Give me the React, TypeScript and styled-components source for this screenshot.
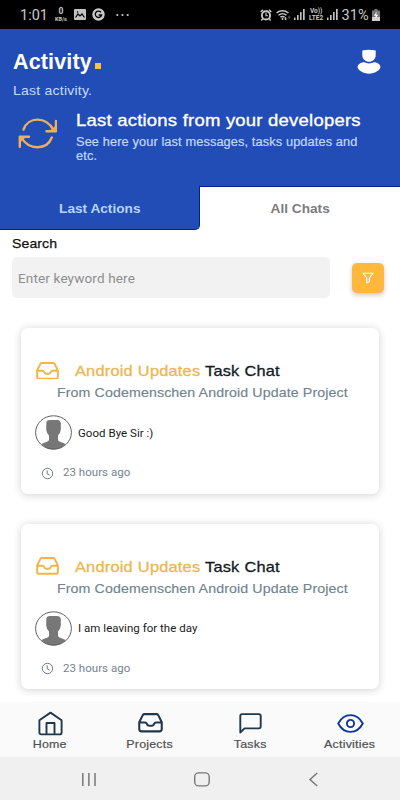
import React from 'react';
import styled, { createGlobalStyle } from 'styled-components';

const GlobalStyle = createGlobalStyle`
  * { box-sizing: border-box; }
  body { margin: 0; background: #fff; }
  svg { display: block; flex: none; }
`;

const sans = '"Liberation Sans", Arial, sans-serif';
const roboto = 'Roboto, sans-serif';

const Screen = styled.div`
  width: 400px;
  height: 800px;
  display: flex;
  flex-direction: column;
  overflow: hidden;
  background: #fff;
  font-family: ${sans};
`;

const StatusBar = styled.div`
  height: 29px;
  flex: none;
  display: flex;
  align-items: center;
  justify-content: space-between;
  padding: 0 20px 0 20px;
  background: #000;
  color: #c9c9c9;
  font-family: ${roboto};
`;

const StatusGroup = styled.div<{ $gap: number }>`
  display: flex;
  align-items: center;
  gap: ${(p) => p.$gap}px;
`;

const StatusText = styled.span`
  font-size: 14.5px;
  line-height: 29px;
  padding-top: 2px;
`;

const TinyStack = styled.span<{ $top: number; $bottom: number; $width: number; $lead?: number }>`
  display: flex;
  flex-direction: column;
  align-items: center;
  width: ${(p) => p.$width}px;
  font-weight: 700;
  white-space: nowrap;
  span:first-child { font-size: ${(p) => p.$top}px; line-height: ${(p) => p.$lead ?? 7}px; }
  span:last-child { font-size: ${(p) => p.$bottom}px; line-height: 6px; }
`;

const Header = styled.header`
  height: 157px;
  flex: none;
  padding: 20px 19px 0 13px;
  background: #224db7;
  color: #fff;
`;

const TitleRow = styled.div`
  display: flex;
  justify-content: space-between;
  align-items: flex-start;
  height: 34px;
`;

const Title = styled.h1`
  margin: 0;
  display: flex;
  align-items: baseline;
  gap: 3px;
  font-size: 21.5px;
  line-height: 27px;
  font-weight: 700;
  letter-spacing: 0.15px;
`;

const Dot = styled.span`
  width: 6px;
  height: 6px;
  background: #eec643;
`;

const Subtitle = styled.div`
  font-size: 13px;
  line-height: 16px;
  letter-spacing: 0.2px;
  color: #c3dcfb;
  transform: scaleX(1.08);
  transform-origin: left;
`;

const Intro = styled.div`
  display: flex;
  gap: 19px;
  padding: 10px 0 0 4px;
`;

const IntroIcon = styled.div`
  padding-top: 9px;
`;

const IntroTitle = styled.h2`
  margin: 0;
  font-size: 17px;
  line-height: 23px;
  font-weight: 400;
  letter-spacing: 0.2px;
  white-space: nowrap;
  -webkit-text-stroke: 0.35px #fff;
  transform: scaleX(1.088);
  transform-origin: left;
`;

const IntroText = styled.p`
  margin: 4px 0 0;
  width: 274px;
  font-size: 12px;
  line-height: 13.5px;
  letter-spacing: 0.1px;
  color: #c0d8fa;
  -webkit-text-stroke: 0.2px #c0d8fa;
  transform: scaleX(1.066);
  transform-origin: left;
`;

const Tabs = styled.div`
  display: flex;
  height: 45px;
  flex: none;
`;

const Tab = styled.div<{ $active?: boolean }>`
  width: 200px;
  height: 44px;
  line-height: ${(p) => (p.$active ? 46 : 44)}px;
  text-align: center;
  font-size: 13px;
  font-weight: 700;
  color: ${(p) => (p.$active ? '#b7d5fb' : '#7b7b7b')};
  background: ${(p) => (p.$active ? '#224db7' : '#fff')};
  border: 0 solid #06218a;
  border-width: ${(p) => (p.$active ? '0 1px 1px 0' : '1px 0 0 0')};
  border-radius: ${(p) => (p.$active ? '0 0 5px 0' : '0')};
  span { display: inline-block; transform: scaleX(1.05); }
`;

const Content = styled.main`
  flex: 1;
  min-height: 0;
  overflow: hidden;
  padding: 5px 0 0;
`;

const SearchLabel = styled.label`
  display: block;
  margin-left: 12px;
  font-size: 13px;
  line-height: 16px;
  letter-spacing: 0.1px;
  color: #111;
  -webkit-text-stroke: 0.25px #111;
  transform: scaleX(1.08);
  transform-origin: left;
`;

const SearchRow = styled.div`
  display: flex;
  align-items: center;
  justify-content: space-between;
  padding: 5px 16px 0 12px;
`;

const SearchField = styled.div`
  width: 318px;
  height: 41px;
  padding-left: 6px;
  border-radius: 5px;
  background: #f2f2f2;
  color: #8e8e8e;
  font-family: ${roboto};
  font-size: 13.5px;
  line-height: 42px;
  letter-spacing: 0.15px;
`;

const FilterButton = styled.button`
  width: 32px;
  height: 30px;
  display: grid;
  place-items: center;
  padding: 0;
  border: 0;
  border-radius: 5px;
  background: #ffb73c;
  box-shadow: 0 2px 5px rgba(0, 0, 0, 0.22);
`;

const CardList = styled.div`
  display: flex;
  flex-direction: column;
  gap: 30px;
  padding: 30px 21px 0;
`;

const Card = styled.article`
  height: 165.5px;
  flex: none;
  padding: 32px 14px 0;
  border-radius: 7px;
  background: #fff;
  box-shadow: 0 1px 9px rgba(0, 0, 0, 0.19);
`;

const CardHeading = styled.div`
  display: flex;
  align-items: center;
  gap: 16px;
  height: 22px;
`;

const CardTitle = styled.h3`
  margin: 0;
  font-size: 15px;
  line-height: 22px;
  font-weight: 400;
  letter-spacing: 0.2px;
  word-spacing: 0.2px;
  white-space: nowrap;
  color: #111b26;
  -webkit-text-stroke: 0.3px;
  transform: scaleX(1.09);
  transform-origin: left;
`;

const Accent = styled.span`
  color: #edb652;
`;

const Project = styled.div`
  margin: 2px 0 0 22px;
  font-size: 13.5px;
  line-height: 18px;
  letter-spacing: 0.1px;
  white-space: nowrap;
  color: #6f8390;
  -webkit-text-stroke: 0.15px;
  transform: scaleX(1.052);
  transform-origin: left;
`;

const Message = styled.div`
  display: flex;
  align-items: center;
  gap: 6px;
  margin-top: 13px;
  font-family: ${roboto};
  font-size: 11.5px;
  letter-spacing: 0.03px;
  color: #1a1a1a;
`;

const Time = styled.div`
  display: flex;
  align-items: center;
  gap: 9px;
  padding: 13px 0 0 6px;
  font-family: ${roboto};
  font-size: 11.5px;
  line-height: 18px;
  letter-spacing: 0.02px;
  color: #74838d;
  svg { margin-top: 2px; }
`;

const BottomNav = styled.nav`
  height: 55px;
  flex: none;
  display: grid;
  grid-template-columns: repeat(4, 1fr);
  background: #fafafa;
`;

const NavItem = styled.div<{ $active?: boolean }>`
  display: flex;
  flex-direction: column;
  align-items: center;
  padding-top: 8px;
  color: ${(p) => (p.$active ? '#0c379b' : '#20384d')};
`;

const NavLabel = styled.span`
  margin-top: 1px;
  font-size: 11.5px;
  line-height: 14px;
  letter-spacing: 0.2px;
  color: #505050;
  -webkit-text-stroke: 0.2px;
  transform: scaleX(1.08);
`;

const SystemNav = styled.div`
  height: 43px;
  flex: none;
  display: flex;
  align-items: center;
  justify-content: space-between;
  padding: 1px 81px 0 80px;
  background: #f0f0f0;
`;

const ImageIcon = () => (
  <svg width="12" height="11" viewBox="0 0 12 11">
    <rect width="12" height="11" rx="1" fill="#c4c4c4" />
    <path d="M1.5 8.5 4 5l2 2 2-2 2.5 3.5" fill="none" stroke="#000" strokeWidth="1.2" />
    <circle cx="3.5" cy="3" r=".8" fill="#000" />
  </svg>
);

const GIcon = () => (
  <svg width="13" height="13" viewBox="0 0 13 13">
    <circle cx="6.5" cy="6.5" r="6.2" fill="#c9c9c9" />
    <path d="M9 4.3A3.2 3.2 0 1 0 9.6 7H6.6" fill="none" stroke="#000" strokeWidth="1.3" />
  </svg>
);

const DotsIcon = () => (
  <svg width="18" height="4" viewBox="-5 0 18 4" fill="#c9c9c9">
    <circle cx="1.3" cy="2" r="1.1" /><circle cx="6.5" cy="2" r="1.1" /><circle cx="11.7" cy="2" r="1.1" />
  </svg>
);

const AlarmIcon = () => (
  <svg width="12" height="12" viewBox="0 0 12 12" fill="none" stroke="#c9c9c9">
    <circle cx="6" cy="6.4" r="4.1" strokeWidth="1.9" />
    <path d="M6 4v2.7h2" strokeWidth="1.1" />
    <path d="M.7 3 3 .8M11.3 3 9 .8M2.6 10 1.3 11.4M9.4 10l1.3 1.4" strokeWidth="1.5" />
  </svg>
);

const WifiIcon = () => (
  <svg width="15" height="12" viewBox="0 0 15 12" fill="none" stroke="#c4c4c4">
    <path d="M.6 4a8.7 8.7 0 0 1 11.8 0M2.5 6.2a6 6 0 0 1 8 0M4.4 8.3a3.3 3.3 0 0 1 4.2 0" strokeWidth="1.4" />
    <circle cx="6.5" cy="10" r="1" fill="#c4c4c4" stroke="none" />
    <path d="M9.6 11V8M8.5 9.6l1.1 1.3 1.1-1.3" />
    <path d="M13.2 6.7v3M12 8.2h2.5" stroke="#555" />
  </svg>
);

const SignalIcon = () => (
  <svg width="11" height="11" viewBox="0 0 11 11" fill="#c4c4c4">
    <rect y="8.5" width="1.5" height="2.5" /><rect x="3" y="6" width="1.6" height="5" />
    <rect x="6" y="3" width="1.6" height="8" /><rect x="9" width="1.7" height="11" />
  </svg>
);

const BatteryIcon = () => (
  <svg width="8" height="12" viewBox="0 0 8 12">
    <path d="M2.4 0h3.2v1.5H8V12H0V1.5h2.4z" fill="#777" />
    <path d="M0 8h8v4H0z" fill="#d0d0d0" />
    <path d="M4.8 2.5 1.8 6.7h2L3.2 10l3-4.3h-2z" fill="#fff" />
  </svg>
);

const UserIcon = () => (
  <svg width="24" height="25" viewBox="0 0 24 25" fill="#fff">
    <path d="M5.3 1.6Q12-.2 18.700 1.600V6c0 4.400-3.400 6.800-6.700 6.800S5.300 10.400 5.300 6z" />
    <path d="M.6 18c0-2.500 3-4.700 6.600-4.700 1.500.7 3 1.100 4.800 1.100s3.300-.4 4.800-1.100c3.600 0 6.600 2.200 6.600 4.700 0 3.200-6 6.700-11.400 6.700S.6 21.200.6 18z" />
  </svg>
);

const RefreshIcon = () => (
  <svg width="40" height="31" viewBox="0 0 40 31" fill="none" stroke="#ecb05e" strokeWidth="2.4" strokeLinecap="round" strokeLinejoin="round">
    <path d="M6.500 11.500C11-1.500 29-2 36.500 12M39 3v10.200H29.500" />
    <path d="M34.800 19.500C30 32 12 33 4 19M2.800 28.800V18.700H12" />
    <path d="M38.700 7v6h-7.500l4-2zM3 25v-6h7.500l-4 2z" stroke="none" fill="#f0ae48" />
  </svg>
);

const FilterIcon = () => (
  <svg width="12" height="12" viewBox="0 0 12 12" fill="none" stroke="#fff" strokeWidth="1.1" strokeLinejoin="round">
    <path d="M.9 1.200h10.200L7.300 6v3.500L4.800 10.900V6z" />
  </svg>
);

const InboxIcon = ({ size, width }: { size: number; width: number }) => (
  <svg width={size} height={(size * 18.6) / 24} viewBox="0 2.7 24 18.6" fill="none" stroke="currentColor" strokeWidth={width} strokeLinejoin="round">
    <path d="M1.200 11.500v6.500q0 2.300 2.300 2.300h17q2.300 0 2.300-2.300v-6.500L19.700 5.200Q19.200 3.800 17.900 3.800H6.100Q4.800 3.800 4.300 5.200zM1.200 11.800h5.600q1.200 0 1.600 1.100.6 2 2.200 2h2.800q1.600 0 2.200-2 .4-1.100 1.600-1.100h5.600" />
  </svg>
);

const InboxAccent = styled.span`
  width: 24px;
  margin-top: -1px;
  padding-left: 1px;
  color: #f0b54c;
`;

const Avatar = () => (
  <svg width="37" height="35" viewBox="0 0 37 35">
    <path d="M11.400 7Q12 5 15 4.900h7Q25.300 5 25.800 8v6.500q-.3 3.500-2.800 6v4.700q1 1.300 4 2.200 2.300.8 3.500 1.700-4.500 5.400-12 5.400T6.500 29.100q1.200-.9 3.500-1.700 3-.9 4-2.200v-4.700q-2.500-2.500-2.800-6z" fill="#777" />
    <ellipse cx="18.500" cy="17.500" rx="17.900" ry="16.700" fill="none" stroke="#606060" strokeWidth="1" />
  </svg>
);

const ClockIcon = () => (
  <svg width="13" height="13" viewBox="0 0 13 13" fill="none" stroke="#6a7983" strokeWidth="1">
    <circle cx="6.500" cy="6.500" r="5.200" /><path d="M6.200 3.300v3.500l2.500 1.400" />
  </svg>
);

const HomeIcon = () => (
  <svg width="25" height="25" viewBox="0 0 25 25" fill="none" stroke="currentColor" strokeWidth="1.9" strokeLinejoin="round">
    <path d="M1.400 9.200 12.500 1.600l11.100 7.600v12.300q0 1.900-1.900 1.900H3.300q-1.900 0-1.900-1.900z" />
    <path d="M8.500 23.400V12h8v11.400" />
  </svg>
);

const ChatIcon = () => (
  <svg width="23" height="21" viewBox="0 0 23 21" fill="none" stroke="currentColor" strokeWidth="1.9" strokeLinejoin="round">
    <path d="M1.300 19.500V2.900q0-1.800 1.800-1.800h16.800q1.800 0 1.800 1.800v10.700q0 1.800-1.800 1.800H5.500z" />
  </svg>
);

const EyeIcon = () => (
  <svg width="27" height="19" viewBox="0 0 27 19" fill="none" stroke="currentColor" strokeWidth="1.9" strokeLinejoin="round">
    <path d="M1.200 9.500C4 4.200 8.500 1.100 13.500 1.100s9.500 3.100 12.300 8.400c-2.800 5.300-7.300 8.400-12.300 8.400S4 14.800 1.200 9.500z" />
    <circle cx="13.500" cy="9.500" r="3.600" />
  </svg>
);

const NavIconBox = styled.span`
  height: 26px;
  display: flex;
  align-items: center;
`;

const chats = [
  { task: 'Android Updates', project: 'Codemenschen Android Update Project', message: 'Good Bye Sir :)', time: '23 hours ago' },
  { task: 'Android Updates', project: 'Codemenschen Android Update Project', message: 'I am leaving for the day', time: '23 hours ago' },
];

const navItems = [
  { label: 'Home', icon: <HomeIcon /> },
  { label: 'Projects', icon: <InboxIcon size={25} width={2} /> },
  { label: 'Tasks', icon: <ChatIcon /> },
  { label: 'Activities', icon: <EyeIcon />, active: true },
];

export default function App() {
  return (
    <Screen>
      <GlobalStyle />
      <StatusBar>
        <StatusGroup $gap={6}>
          <StatusText>1:01</StatusText>
          <TinyStack $top={8.5} $bottom={5.5} $width={14} $lead={9}><span>0</span><span>KB/s</span></TinyStack>
          <ImageIcon />
          <GIcon />
          <DotsIcon />
        </StatusGroup>
        <StatusGroup $gap={3.5}>
          <AlarmIcon />
          <WifiIcon />
          <SignalIcon />
          <TinyStack $top={6.5} $bottom={6.5} $width={15}><span>Vo))</span><span>LTE2</span></TinyStack>
          <SignalIcon />
          <StatusText>31%</StatusText>
          <BatteryIcon />
        </StatusGroup>
      </StatusBar>
      <Header>
        <TitleRow>
          <Title>Activity<Dot /></Title>
          <UserIcon />
        </TitleRow>
        <Subtitle>Last activity.</Subtitle>
        <Intro>
          <IntroIcon><RefreshIcon /></IntroIcon>
          <div>
            <IntroTitle>Last actions from your developers</IntroTitle>
            <IntroText>See here your last messages, tasks updates and etc.</IntroText>
          </div>
        </Intro>
      </Header>
      <Tabs>
        <Tab $active><span>Last Actions</span></Tab>
        <Tab><span>All Chats</span></Tab>
      </Tabs>
      <Content>
        <SearchLabel>Search</SearchLabel>
        <SearchRow>
          <SearchField>Enter keyword here</SearchField>
          <FilterButton aria-label="Filter"><FilterIcon /></FilterButton>
        </SearchRow>
        <CardList>
          {chats.map((chat) => (
            <Card key={chat.message}>
              <CardHeading>
                <InboxAccent><InboxIcon size={23} width={2.1} /></InboxAccent>
                <CardTitle><Accent>{chat.task}</Accent> Task Chat</CardTitle>
              </CardHeading>
              <Project>From {chat.project}</Project>
              <Message><Avatar />{chat.message}</Message>
              <Time><ClockIcon />{chat.time}</Time>
            </Card>
          ))}
        </CardList>
      </Content>
      <BottomNav>
        {navItems.map((item) => (
          <NavItem key={item.label} $active={item.active}>
            <NavIconBox>{item.icon}</NavIconBox>
            <NavLabel>{item.label}</NavLabel>
          </NavItem>
        ))}
      </BottomNav>
      <SystemNav>
        <svg width="17" height="15" viewBox="0 0 17 15" stroke="#777" strokeWidth="1.5"><path d="M2.800 1v13M8.900 1v13M15 1v13" /></svg>
        <svg width="17" height="15" viewBox="0 0 17 15" fill="none" stroke="#777" strokeWidth="1.4"><rect x="0.7" y="0.9" width="14.5" height="13" rx="4" /></svg>
        <svg width="11" height="15" viewBox="0 0 11 15" fill="none" stroke="#777" strokeWidth="1.5"><path d="M9.200 1 2 7.500 9.200 14" /></svg>
      </SystemNav>
    </Screen>
  );
}
